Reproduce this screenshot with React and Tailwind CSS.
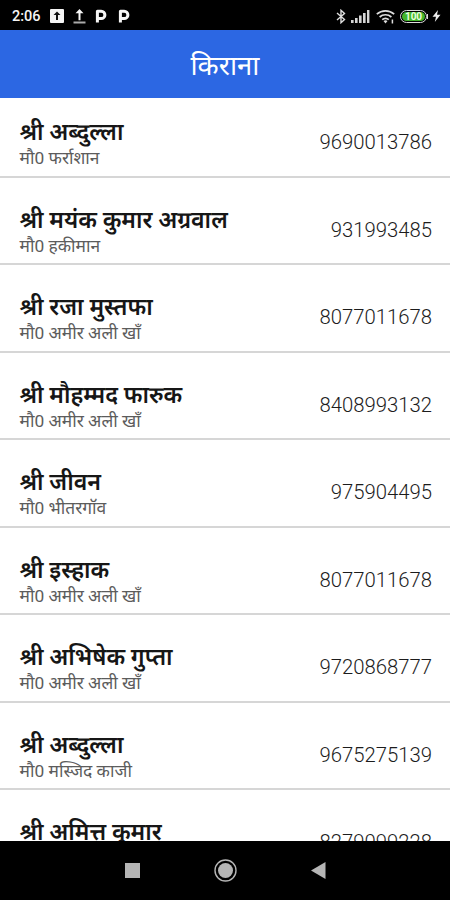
import React from 'react';

const contacts = [
    { name: 'श्री अब्दुल्ला', area: 'मौ0 फर्राशान', phone: '9690013786' },
    { name: 'श्री मयंक कुमार अग्रवाल', area: 'मौ0 हकीमान', phone: '931993485' },
    { name: 'श्री रजा मुस्तफा', area: 'मौ0 अमीर अली खाॅं', phone: '8077011678' },
    { name: 'श्री मौहम्मद फारुक', area: 'मौ0 अमीर अली खाॅं', phone: '8408993132' },
    { name: 'श्री जीवन', area: 'मौ0 भीतरगॉव', phone: '975904495' },
    { name: 'श्री इस्हाक', area: 'मौ0 अमीर अली खाॅं', phone: '8077011678' },
    { name: 'श्री अभिषेक गुप्ता', area: 'मौ0 अमीर अली खाॅं', phone: '9720868777' },
    { name: 'श्री अब्दुल्ला', area: 'मौ0 मस्जिद काजी', phone: '9675275139' },
    { name: 'श्री अमित्त कुमार', area: '', phone: '8279099228' },
];

function ParkingIcon() {
    return (
        <svg width="12" height="14" viewBox="0 0 12 14" fill="none" stroke="#f5f5f5" strokeWidth="3">
            <path d="M2.4 13.6V2.2H6.2a3.7 3.7 0 0 1 0 7.4H2.4" strokeLinejoin="round" />
        </svg>
    );
}

function StatusBar() {
    return (
        <div className="h-[30px] shrink-0 bg-black text-[#f5f5f5] flex items-center justify-between pl-3 pr-[9px] pt-0.5">
            <div className="flex items-center">
                <span className="w-[38px] pt-0.5 text-[14.5px] font-medium leading-none">2:06</span>
                <svg width="14" height="14" viewBox="0 0 14 14">
                    <rect width="14" height="14" rx="1" fill="#f5f5f5" />
                    <path d="M7 2.5 10.5 6H8v5H6V6H3.5Z" fill="#111" />
                </svg>
                <svg className="ml-[9px]" width="13" height="15" viewBox="0 0 13 15">
                    <path d="M6.5 0 10.5 4.2H7.5v7h-2v-7h-3Z" fill="#f5f5f5" />
                    <path d="M.5 13.5h12" stroke="#aaa" strokeWidth="2" />
                </svg>
                <span className="ml-[9px]"><ParkingIcon /></span>
                <span className="ml-[11px]"><ParkingIcon /></span>
            </div>
            <div className="flex items-center">
                <svg width="10" height="15" viewBox="0 0 10 15" fill="none" stroke="#ddd" strokeWidth="1.4">
                    <path d="m1 4 7.5 6.5L5 13.7V1.3l3.5 3.2L1 11" />
                </svg>
                <svg className="ml-[5px]" width="19" height="13" viewBox="0 0 19 13" fill="#d5d5d5">
                    <rect x="0" y="10" width="2.6" height="3" />
                    <rect x="4" y="8" width="2.6" height="5" />
                    <rect x="8" y="5.5" width="2.6" height="7.5" />
                    <rect x="12" y="3" width="2.6" height="10" />
                    <rect x="16" y="0" width="2.4" height="13" />
                </svg>
                <svg className="ml-1.5" width="19" height="15" viewBox="0 0 19 15" fill="none" stroke="#ddd" strokeWidth="1.7">
                    <path d="M.8 5.2c5-4.4 12.4-4.4 17.4 0M3.6 8c3.4-3 8.4-3 11.8 0M6.2 10.7c2-1.7 4.6-1.7 6.6 0" />
                    <path d="m9.5 14.5-2-2.6c1.2-.8 2.8-.8 4 0Z" fill="#ddd" stroke="none" />
                    <path d="M16.4 10.5v4" strokeWidth="1.5" />
                </svg>
                <div className="ml-[5px] w-[27px] h-[13px] rounded-full border border-[#ddd] p-px">
                    <div className="h-full rounded-full bg-[#43b52b] text-[10px] font-bold leading-[9px] text-center text-[#eaffdf]">100</div>
                </div>
                <div className="w-px h-[5px] bg-[#ddd]" />
                <svg className="ml-1" width="9" height="12" viewBox="0 0 9 12" fill="#eee">
                    <path d="M6 0 .5 6.8H4L2.8 12 8.5 4.8H5Z" />
                </svg>
            </div>
        </div>
    );
}

function ContactRow({ contact }) {
    return (
        <div className="h-[87.5px] shrink-0 flex items-start justify-between pt-7 pl-[19.5px] pr-[18px] border-b-2 border-[#d6d6d6]">
            <div className="flex flex-col whitespace-nowrap">
                <span className="text-[23.2px] leading-7 font-semibold text-[#161616]">{contact.name}</span>
                <span className="text-[17.4px] leading-6 text-[#5c5c5c]">{contact.area}</span>
            </div>
            <span className="pt-3 text-[20.3px] leading-6 font-light text-[#1c1c1c]">{contact.phone}</span>
        </div>
    );
}

function NavBar() {
    return (
        <div className="h-[59px] shrink-0 bg-black flex items-center justify-center gap-[74px]">
            <div className="w-[15px] h-[15px] bg-[#b5b5b5]" />
            <svg width="23" height="23" viewBox="0 0 23 23">
                <circle cx="11.5" cy="11.5" r="10.5" fill="none" stroke="#b5b5b5" strokeWidth="1.4" />
                <circle cx="11.5" cy="11.5" r="7.5" fill="#b5b5b5" />
            </svg>
            <svg width="15" height="17" viewBox="0 0 15 17">
                <path d="M14.5 0v17L0 8.5Z" fill="#b5b5b5" />
            </svg>
        </div>
    );
}

function App() {
    return (
        <div className="w-[450px] h-[900px] flex flex-col overflow-hidden bg-white font-[Roboto,'Noto_Sans_Devanagari','Noto_Sans',sans-serif]">
            <StatusBar />
            <header className="h-[68px] shrink-0 bg-[#2c67e3] flex items-center justify-center">
                <h1 className="pt-1 text-[27.5px] leading-9 text-white">किराना</h1>
            </header>
            <main className="h-[743px] shrink-0 overflow-hidden flex flex-col">
                <div className="-mt-2 flex flex-col">
                    {contacts.map((contact, i) => (
                        <ContactRow key={i} contact={contact} />
                    ))}
                </div>
            </main>
            <NavBar />
        </div>
    );
}

export default App;
